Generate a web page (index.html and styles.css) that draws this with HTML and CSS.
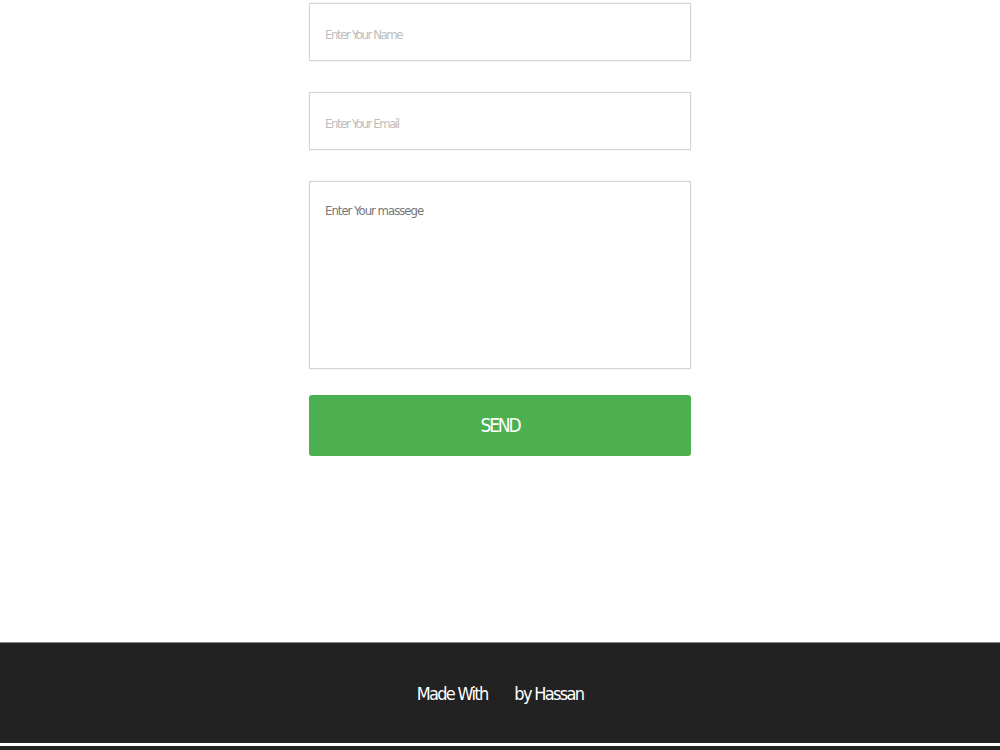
FILE: index.html
```html
<!DOCTYPE html>
<html>
<head>
    <link rel="stylesheet" href="styles.css">
    <title>Contact</title>
</head>
<body>
    <section class="contact">
        <form class="contact-form">
            <input class="field" type="text" placeholder="Enter Your Name">
            <input class="field" type="email" placeholder="Enter Your Email">
            <textarea class="field message" placeholder="Enter Your massege"></textarea>
            <button class="send" type="button">SEND</button>
        </form>
    </section>
    <footer class="footer">
        <p>Made With <span class="heart"></span> by Hassan</p>
    </footer>
    <div class="bottom-bar"></div>
</body>
</html>
```

FILE: styles.css
```css
body {
    margin: 0;
    background-color: #ffffff;
    font-family: "DejaVu Sans Condensed", "Liberation Sans", sans-serif;
}

.contact {
    height: 642px;
    display: flex;
    justify-content: center;
}

.contact-form {
    width: 382px;
    padding-top: 3px;
    display: flex;
    flex-direction: column;
}

.field {
    box-sizing: border-box;
    width: 100%;
    height: 58px;
    margin-bottom: 31px;
    padding: 4px 15px 0;
    border: 1px solid #d4d4d4;
    box-shadow: 0 0 2px rgba(0, 0, 0, 0.08);
    font-family: inherit;
    font-size: 13px;
    letter-spacing: -1.4px;
    outline: none;
}

.field::placeholder {
    color: #bdbdbd;
}

.message {
    height: 188px;
    margin-bottom: 26px;
    padding: 21px 15px;
    resize: none;
    font-size: 13px;
    letter-spacing: -1px;
}

.message::placeholder {
    color: #777777;
}

.send {
    height: 61px;
    padding-top: 0;
    border: none;
    border-radius: 3px;
    background-color: #4caf50;
    color: #ffffff;
    font-family: inherit;
    font-size: 19px;
    letter-spacing: -2.2px;
    cursor: pointer;
}

.footer {
    height: 101px;
    background-color: #222222;
    border-top: 1px solid #888888;
    box-sizing: border-box;
    display: flex;
    align-items: center;
    justify-content: center;
}

.footer p {
    margin: 0;
    color: #ffffff;
    font-size: 18px;
    letter-spacing: -1.7px;
}

.heart {
    display: inline-block;
    width: 20px;
}

.bottom-bar {
    height: 4px;
    margin-top: 3px;
    background-color: #222222;
}
```
